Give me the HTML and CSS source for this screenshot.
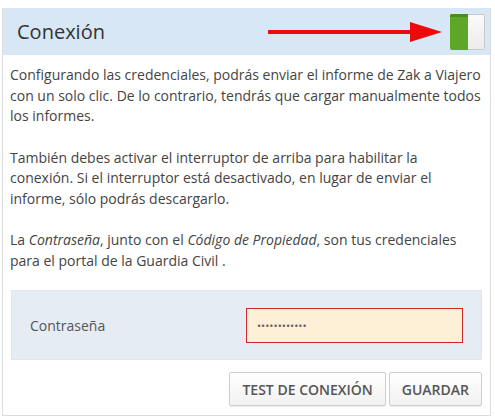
FILE: index.html
```html
<!DOCTYPE html>
<html>
<head>
  <title>Conexión</title>
  <link rel="stylesheet" href="styles.css">
</head>
<body>
  <div class="panel">
    <div class="panel-header">
      <h3>Conexión</h3>
      <svg class="arrow" width="174" height="24" viewBox="0 0 174 24">
        <rect x="0" y="10" width="146" height="4" fill="#ee0a0a"/>
        <polygon points="142,2 174,12 142,22" fill="#ee0a0a"/>
      </svg>
      <div class="switch">
        <span class="switch-on"></span>
        <span class="switch-knob"></span>
      </div>
    </div>

    <div class="panel-body">
      <p>Configurando las credenciales, podrás enviar el informe de Zak a Viajero con un solo clic. De lo contrario, tendrás que cargar manualmente todos los informes.</p>
      <p>También debes activar el interruptor de arriba para habilitar la conexión. Si el interruptor está desactivado, en lugar de enviar el informe, sólo podrás descargarlo.</p>
      <p>La <em>Contraseña</em>, junto con el <em>Código de Propiedad</em>, son tus credenciales para el portal de la Guardia Civil .</p>

      <div class="form-box">
        <label for="pass">Contraseña</label>
        <input type="password" id="pass" value="••••••••••••" class="input-error">
      </div>

      <div class="actions">
        <button>Test de conexión</button>
        <button>Guardar</button>
      </div>
    </div>
  </div>
</body>
</html>
```

FILE: styles.css
```css
body {
  font-family: "Open Sans", "Liberation Sans", sans-serif;
  margin: 0;
  padding: 0;
  background: #fff;
  color: #444;
}

.panel {
  width: 487px;
  margin: 8px 0 0 2px;
  border: 1px solid #dcdcdc;
  border-top: none;
}

.panel-header {
  height: 47px;
  background: #d7e7f5;
  display: flex;
  align-items: center;
  padding: 0 5px 0 14px;
}

.panel-header h3 {
  margin: 0;
  font-size: 20px;
  font-weight: normal;
  color: #333;
  flex: 1;
}

.arrow {
  display: block;
  margin-right: 8px;
}

.switch {
  display: flex;
  width: 35px;
  height: 36px;
  border-radius: 2px;
  overflow: hidden;
}

.switch-on {
  width: 18px;
  background: #5ea628;
  border-top: 3px solid #4b8a1c;
}

.switch-knob {
  flex: 1;
  background: linear-gradient(#fafafa, #ececec);
  border: 1px solid #c8c8c8;
  border-left: none;
  border-radius: 0 2px 2px 0;
}

.panel-body {
  padding: 10px 8px 9px 7px;
}

.panel-body p {
  margin: 0 0 21px 0;
  font-size: 14px;
  line-height: 20.5px;
  padding-left: 0;
}

.panel-body p:nth-of-type(3) {
  margin-bottom: 19px;
}

.form-box {
  background: #e6ecf3;
  margin-left: 1px;
  height: 70px;
  display: flex;
  align-items: center;
  padding: 0 18px 0 18px;
  border: 1px solid #dfe5ec;
  box-sizing: border-box;
}

.form-box label {
  font-size: 14px;
  color: #555;
  width: 217px;
}

.form-box input {
  width: 218px;
  height: 35px;
  box-sizing: border-box;
  font-family: inherit;
  font-size: 11px;
  color: #666;
  padding: 0 10px;
  background: #fdf0d6;
  border: 1px solid #cc2a2a;
  border-radius: 0;
  outline: none;
}

.actions {
  display: flex;
  justify-content: flex-end;
  gap: 3px;
  margin-top: 12px;
}

.actions button {
  height: 34px;
  padding: 0 12px;
  font-family: inherit;
  font-size: 14px;
  font-weight: 600;
  text-transform: uppercase;
  color: #555;
  background: linear-gradient(#ffffff, #f1f1f1);
  border: 1px solid #cfcfcf;
  border-radius: 2px;
  box-shadow: 0 1px 1px rgba(0,0,0,0.08);
}
```
